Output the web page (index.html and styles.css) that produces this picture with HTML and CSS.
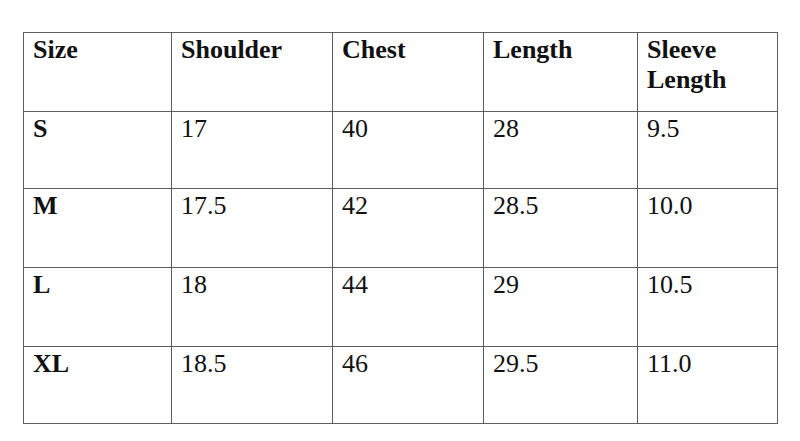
FILE: index.html
```html
<!DOCTYPE html>
<html>
<head>
<meta charset="utf-8">
<link rel="stylesheet" href="styles.css">
</head>
<body>
<table class="size-table">
  <colgroup>
    <col class="c1"><col class="c2"><col class="c3"><col class="c4"><col class="c5">
  </colgroup>
  <tr class="head">
    <th>Size</th><th>Shoulder</th><th>Chest</th><th>Length</th><th>Sleeve<br>Length</th>
  </tr>
  <tr class="r1">
    <th>S</th><td>17</td><td>40</td><td>28</td><td>9.5</td>
  </tr>
  <tr class="r2">
    <th>M</th><td>17.5</td><td>42</td><td>28.5</td><td>10.0</td>
  </tr>
  <tr class="r3">
    <th>L</th><td>18</td><td>44</td><td>29</td><td>10.5</td>
  </tr>
  <tr class="r4">
    <th>XL</th><td>18.5</td><td>46</td><td>29.5</td><td>11.0</td>
  </tr>
</table>
</body>
</html>
```

FILE: styles.css
```css
html, body {
  margin: 0;
  padding: 0;
  background: #fff;
}
body {
  padding: 32px 0 0 23px;
  font-family: "Liberation Serif", "Times New Roman", serif;
  color: #111;
}
.size-table {
  border-collapse: collapse;
  table-layout: fixed;
  width: 755px;
  font-size: 26px;
  line-height: 30px;
}
.c1 { width: 148px; }
.c2 { width: 161px; }
.c3 { width: 151px; }
.c4 { width: 154px; }
.c5 { width: 140px; }
.size-table th,
.size-table td {
  border: 1px solid #5e5e5e;
  padding: 2px 8px 0 9px;
  vertical-align: top;
  text-align: left;
}
.size-table th { font-weight: bold; }
.size-table td { font-weight: normal; }
.head th { height: 76px; }
.r1 th, .r1 td { height: 74px; }
.r2 th, .r2 td { height: 76px; }
.r3 th, .r3 td { height: 76px; }
.r4 th, .r4 td { height: 74px; }
```
